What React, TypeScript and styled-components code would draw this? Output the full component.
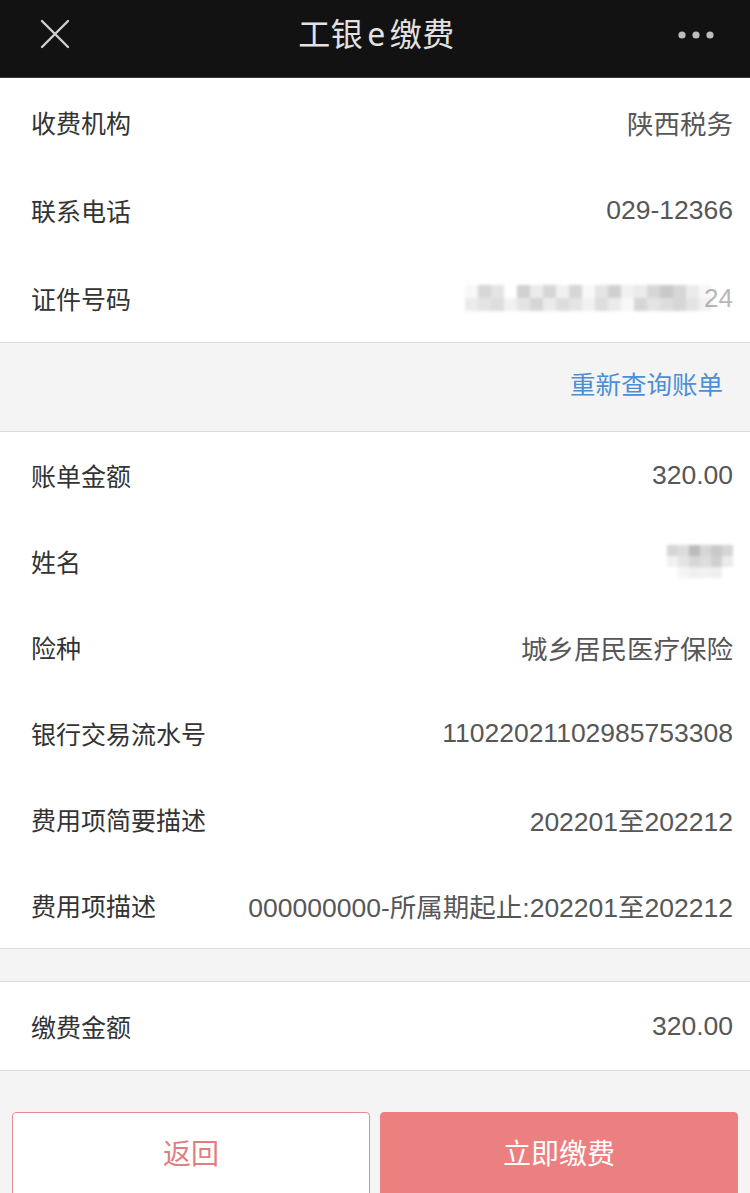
import React, { FC } from 'react'
import styled, { createGlobalStyle } from 'styled-components'

const GlobalStyle = createGlobalStyle`
	html, body {
		margin: 0;
		padding: 0;
		background: #f4f4f4;
	}
	body {
		font-family: "Noto Sans CJK SC", "Noto Sans", "Liberation Sans", sans-serif;
		-webkit-font-smoothing: antialiased;
	}
`

type Row = { label: string; value?: string; mosaic?: number[][]; tail?: string }

const topRows: Row[] = [
	{ label: '收费机构', value: '陕西税务' },
	{ label: '联系电话', value: '029-12366' },
	{
		label: '证件号码',
		mosaic: [
			[0.05, 0.3, 0.2, 0, 0.35, 0.15, 0.3, 0.1, 0.3, 0.05, 0.2, 0.35, 0.1, 0.15, 0.3, 0.4, 0.3, 0.15, 0.05],
			[0.15, 0.2, 0.25, 0.1, 0.2, 0.3, 0.15, 0.25, 0.2, 0.1, 0.25, 0.15, 0.05, 0.3, 0.2, 0.25, 0.3, 0.2, 0.1],
		],
		tail: '24',
	},
]

const billRows: Row[] = [
	{ label: '账单金额', value: '320.00' },
	{
		label: '姓名',
		mosaic: [
			[0.3, 0.25, 0.5, 0.3, 0.4, 0.3],
			[0.1, 0.2, 0.3, 0.25, 0.35, 0.15],
			[0, 0.08, 0.12, 0.1, 0.12, 0],
		],
	},
	{ label: '险种', value: '城乡居民医疗保险' },
	{ label: '银行交易流水号', value: '11022021102985753308' },
	{ label: '费用项简要描述', value: '202201至202212' },
	{ label: '费用项描述', value: '000000000-所属期起止:202201至202212' },
]

const CloseIcon: FC = () => (
	<svg width="32" height="32" viewBox="0 0 32 32">
		<path d="M3 3 L29 29 M29 3 L3 29" stroke="#cfcfcf" strokeWidth="2.4" strokeLinecap="round" />
	</svg>
)

const MoreIcon: FC = () => (
	<svg width="36" height="10" viewBox="0 0 36 10">
		<circle cx="4" cy="5" r="3.6" fill="#bdbdbd" />
		<circle cx="18" cy="5" r="3.6" fill="#bdbdbd" />
		<circle cx="32" cy="5" r="3.6" fill="#bdbdbd" />
	</svg>
)

const Mosaic: FC<{ cells: number[][]; size: number; tail?: string }> = ({ cells, size, tail }) => (
	<MosaicWrap>
		<MosaicGrid $cols={cells[0].length} $size={size}>
			{cells.flat().map((v, i) => (
				<MosaicCell key={i} style={{ background: `rgba(120,120,120,${v})` }} />
			))}
		</MosaicGrid>
		{tail && <MosaicTail>{tail}</MosaicTail>}
	</MosaicWrap>
)

const InfoRow: FC<{ row: Row; height?: number }> = ({ row, height = 86 }) => (
	<RowWrap $height={height}>
		<Label>{row.label}</Label>
		{row.mosaic ? (
			<Mosaic cells={row.mosaic} size={row.tail ? 13 : 11} tail={row.tail} />
		) : (
			<Value>{row.value}</Value>
		)}
	</RowWrap>
)

export default function App() {
	return (
		<Page>
			<GlobalStyle />
			<Header>
				<HeaderButton>
					<CloseIcon />
				</HeaderButton>
				<Title>
					工银<TitleLatin>e</TitleLatin>缴费
				</Title>
				<HeaderButton $right>
					<MoreIcon />
				</HeaderButton>
			</Header>

			<Section>
				{topRows.map(r => <InfoRow key={r.label} row={r} height={88} />)}
			</Section>

			<RequeryBar>
				<RequeryLink>重新查询账单</RequeryLink>
			</RequeryBar>

			<Section>
				{billRows.map(r => <InfoRow key={r.label} row={r} />)}
			</Section>

			<Gap />

			<Section>
				<InfoRow row={{ label: '缴费金额', value: '320.00' }} height={88} />
			</Section>

			<Actions>
				<Button>返回</Button>
				<Button $primary>立即缴费</Button>
			</Actions>
		</Page>
	)
}

const Page = styled.div`
	width: 750px;
	height: 1193px;
	overflow: hidden;
	background: #f4f4f4;
	display: flex;
	flex-direction: column;
`

const Header = styled.header`
	height: 78px;
	flex-shrink: 0;
	background: #121212;
	border-bottom: 1px solid #3a3a3a;
	box-sizing: border-box;
	display: flex;
	align-items: center;
	justify-content: space-between;
	padding: 0 36px 0 39px;
`

const HeaderButton = styled.div<{ $right?: boolean }>`
	width: 40px;
	display: flex;
	justify-content: ${({ $right }) => ($right ? 'flex-end' : 'flex-start')};
	align-items: center;
	margin-top: ${({ $right }) => ($right ? '-8px' : '-10px')};
`

const Title = styled.h1`
	margin: -14px 0 0;
	font-size: 32px;
	font-weight: 400;
	color: #e2e2e2;
	letter-spacing: 0.5px;
`

const TitleLatin = styled.span`
	font-family: "Noto Sans", "Liberation Sans", sans-serif;
	margin: 0 4px;
`

const Section = styled.section`
	background: #fff;
	border-bottom: 1px solid #dcdcdc;
	flex-shrink: 0;
`

const RowWrap = styled.div<{ $height: number }>`
	height: ${({ $height }) => $height}px;
	display: flex;
	align-items: center;
	justify-content: space-between;
	padding: 0 17px 0 31px;
	gap: 20px;
`

const Label = styled.span`
	font-size: 25px;
	color: #333;
	white-space: nowrap;
`

const Value = styled.span`
	font-family: "Liberation Sans", "Noto Sans CJK SC", sans-serif;
	font-size: 26.5px;
	color: #575757;
	white-space: nowrap;
	text-align: right;
`

const MosaicWrap = styled.div`
	display: flex;
	align-items: center;
`

const MosaicGrid = styled.div<{ $cols: number; $size: number }>`
	display: grid;
	grid-template-columns: repeat(${({ $cols }) => $cols}, ${({ $size }) => $size}px);
	grid-auto-rows: ${({ $size }) => $size}px;
	filter: blur(1.5px);
`

const MosaicCell = styled.span`
	display: block;
`

const MosaicTail = styled.span`
	font-family: "Liberation Sans", sans-serif;
	font-size: 26px;
	color: #b8b8b8;
	margin-left: -8px;
`

const RequeryBar = styled.div`
	height: 89px;
	flex-shrink: 0;
	display: flex;
	align-items: center;
	justify-content: flex-end;
	padding: 0 27px 10px 0;
	box-sizing: border-box;
	border-bottom: 1px solid #dcdcdc;
`

const RequeryLink = styled.a`
	font-size: 25.5px;
	color: #4a8fd8;
	cursor: pointer;
`

const Gap = styled.div`
	height: 32px;
	flex-shrink: 0;
	border-bottom: 1px solid #dcdcdc;
`

const Actions = styled.div`
	display: grid;
	grid-template-columns: 1fr 1fr;
	gap: 10px;
	padding: 41px 12px 0;
`

const Button = styled.button<{ $primary?: boolean }>`
	height: 92px;
	border-radius: 4px;
	border: 1.5px solid ${({ $primary }) => ($primary ? '#ec8080' : '#e38c8c')};
	background: ${({ $primary }) => ($primary ? '#ec7f7f' : '#fff')};
	color: ${({ $primary }) => ($primary ? '#fff' : '#e07f7f')};
	font-family: "Noto Sans CJK SC", sans-serif;
	font-size: 28px;
	padding: 0 0 12px;
	cursor: pointer;
`
